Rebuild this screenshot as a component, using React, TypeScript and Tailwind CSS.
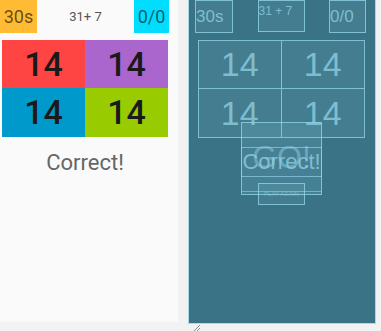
import React from "react";

const font = { fontFamily: "Roboto, 'Noto Sans', sans-serif" };
const bpFont = { fontFamily: "'Liberation Sans', Arial, sans-serif" };

function Design() {
  return (
    <div className="w-[178px] h-[322px] shrink-0 overflow-hidden bg-[#fafafa]" style={font}>
      <div className="w-[186px] -ml-[8px] flex flex-col">
        <div className="flex items-start justify-between pl-[8px] pr-[9px] h-[33px]">
          <div className="w-[37px] h-[33px] bg-[#ffbb33] flex items-center justify-center text-[18px] text-black/60">30s</div>
          <div className="w-[47px] h-[33px] flex items-center justify-center text-[13px] text-[#555]">31+ 7</div>
          <div className="w-[35px] h-[33px] bg-[#00ddff] flex items-center justify-center text-[18px] text-black/60">0/0</div>
        </div>
        <div className="mt-[7px] ml-[10px] w-[166px] grid grid-cols-2 text-[34px] font-medium text-[#1a1a1a]">
          <div className="h-[48px] bg-[#ff4444] flex items-center justify-center">14</div>
          <div className="h-[48px] bg-[#aa66cc] flex items-center justify-center">14</div>
          <div className="h-[49px] bg-[#0099cc] flex items-center justify-center">14</div>
          <div className="h-[49px] bg-[#99cc00] flex items-center justify-center">14</div>
        </div>
        <div className="mt-[10px] h-[30px] flex items-center justify-center text-[22px] text-[#666]">Correct!</div>
      </div>
    </div>
  );
}

function Blueprint() {
  const box = "border border-[#8fd3e6]/80 bg-[#8fd3e6]/10";
  return (
    <div className="ml-[10px] w-[188px] h-[324px] shrink-0 relative overflow-hidden bg-[#3a7386] border border-t-0 border-[#a6dbe9]" style={bpFont}>
      <div className="w-[186px] -ml-[1px] flex flex-col text-[#8fcfe0]/80">
        <div className="flex items-start justify-between pl-[7px] pr-[8px] h-[33px]">
          <div className={`w-[38px] h-[33px] ${box} flex items-center text-[17px] leading-none`}>30s</div>
          <div className={`w-[47px] h-[32px] ${box} text-[12px] leading-none pt-[4px]`}>31 + 7</div>
          <div className={`w-[37px] h-[33px] ${box} flex items-center text-[17px] leading-none`}>0/0</div>
        </div>
        <div className="mt-[7px] ml-[10px] w-[167px] grid grid-cols-2 text-[34px] border border-[#8fd3e6]/80">
          <div className="h-[48px] bg-[#8fd3e6]/10 border-r border-b border-[#8fd3e6]/80 flex items-center justify-center">14</div>
          <div className="h-[48px] bg-[#8fd3e6]/10 border-b border-[#8fd3e6]/80 flex items-center justify-center">14</div>
          <div className="h-[48px] bg-[#8fd3e6]/10 border-r border-[#8fd3e6]/80 flex items-center justify-center">14</div>
          <div className="h-[48px] bg-[#8fd3e6]/10 flex items-center justify-center">14</div>
        </div>
        <div className="mt-[9px] ml-[53px] w-[81px] h-[30px] border border-[#8fd3e6]/70 flex items-center justify-center text-[22px] leading-none">Correct!</div>
      </div>
      <div className="absolute left-[52px] top-[122px] w-[81px] h-[73px] border border-[#8fd3e6]/80 bg-[#8fd3e6]/15 flex items-center justify-center text-[32px] leading-none text-[#8fcfe0]/50 pb-[4px]">
        GO!
        <div className="absolute left-0 right-0 bottom-[2px] border-t border-[#8fd3e6]/60" />
      </div>
      <div className="absolute left-[69px] top-[183px] w-[47px] h-[22px] border border-[#8fd3e6]/80 bg-[#8fd3e6]/10 flex items-center justify-center text-[6px] text-[#8fcfe0]/60">PLAY AGAIN</div>
    </div>
  );
}

export default function App() {
  return (
    <div className="w-[381px] h-[331px] bg-[#f2f2f2] flex items-start relative overflow-hidden">
      <Design />
      <Blueprint />
      <svg className="absolute left-[193px] top-[324px]" width="8" height="8" viewBox="0 0 8 8">
        <path d="M1 7 L7 1 M4 7 L7 4" stroke="#777" strokeWidth="0.8" />
      </svg>
    </div>
  );
}
